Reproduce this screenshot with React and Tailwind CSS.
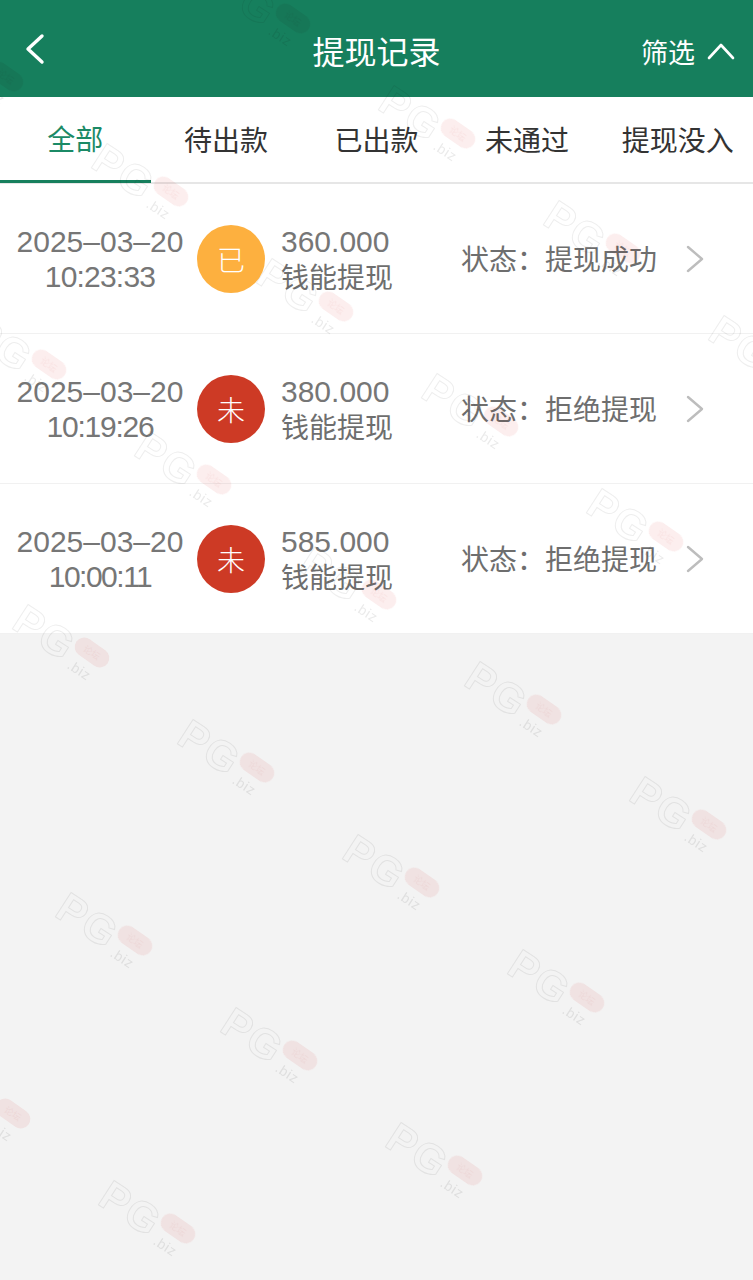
import React from 'react';

const tabs = ['全部', '待出款', '已出款', '未通过', '提现没入'];

const records = [
  { date: '2025–03–20', time: '10:23:33', timeTrack: 'tracking-[-0.8px]', badge: '已', color: 'bg-[#fdb03f]', amount: '360.000', status: '提现成功' },
  { date: '2025–03–20', time: '10:19:26', timeTrack: 'tracking-[-1.2px]', badge: '未', color: 'bg-[#cd3a25]', amount: '380.000', status: '拒绝提现' },
  { date: '2025–03–20', time: '10:00:11', timeTrack: 'tracking-[-1.5px]', badge: '未', color: 'bg-[#cd3a25]', amount: '585.000', status: '拒绝提现' },
];

// site stamp repeats on a skewed lattice, but leaves the far corners empty
const stamps = [];
for (let i = -6; i <= 8; i++) {
  for (let j = -6; j <= 8; j++) {
    const x = 180 + 165 * i - 122 * j;
    const y = 720 + 115 * i + 173 * j;
    const onPage = x > -110 && x < 753 && y > -80 && y < 1280;
    const inEmptyCorner = (x > 500 && y > 1000) || (x > 600 && y < 100);
    if (onPage && !inEmptyCorner) stamps.push({ x, y });
  }
}

function Stamp({ x, y }) {
  return (
    <div className="absolute h-[80px] w-[100px]" style={{ left: x, top: y }}>
      <div className="absolute left-[14px] top-[-7px] flex rotate-[33deg] origin-top-left items-center">
        <span className="font-['Liberation_Sans',sans-serif] text-[42px] leading-none font-bold tracking-[2px] text-transparent [-webkit-text-stroke:1px_#dddddd]">
          PG
        </span>
      </div>
      <span className="absolute left-[52px] top-[58px] rotate-[33deg] font-['Liberation_Sans',sans-serif] text-[14px] leading-none tracking-wider text-[#d6d6d6]">
        .biz
      </span>
      <div className="absolute left-[58px] top-[38px] flex h-[19px] w-[38px] rotate-[35deg] items-center justify-center rounded-full bg-[#f9dcdc] font-['Noto_Sans_CJK_SC',sans-serif] text-[9px] leading-none text-[#f1c4c4]">
        论坛
      </div>
    </div>
  );
}

function Row({ record }) {
  return (
    <div className="flex h-[150px] items-center border-b border-[#f1f1f1] pl-[16px] text-[#6e6e6e]">
      <div className="w-[168px] text-center font-['Liberation_Sans','Noto_Sans_CJK_SC',sans-serif] text-[30px] leading-[35px] text-[#767676]">
        <div>{record.date}</div>
        <div className={record.timeTrack}>{record.time}</div>
      </div>
      <div className={`ml-[13px] flex h-[68px] w-[68px] items-center justify-center rounded-full text-[28px] font-light text-white ${record.color}`}>
        {record.badge}
      </div>
      <div className="ml-[16px] w-[180px] leading-[35px]">
        <div className="font-['Liberation_Sans',sans-serif] text-[30px] text-[#767676]">{record.amount}</div>
        <div className="text-[28px]">钱能提现</div>
      </div>
      <div className="text-[28px] leading-[35px] whitespace-nowrap">
        状态：<span>{record.status}</span>
      </div>
      <svg className="ml-[28px]" width="20" height="30" viewBox="0 0 20 30" fill="none" stroke="#bdbdbd" strokeWidth="2.4" strokeLinecap="round" strokeLinejoin="round">
        <path d="M3 3 L17 15 L3 27" />
      </svg>
    </div>
  );
}

export default function App() {
  return (
    <div className="relative h-[1280px] w-full overflow-hidden bg-[#f3f3f3] font-['Noto_Sans_CJK_SC',sans-serif]">
      <header className="grid h-[97px] grid-cols-[1fr_auto_1fr] items-center bg-[#167f5d] text-white">
        <div className="pl-[24px]">
          <svg width="22" height="32" viewBox="0 0 22 32" fill="none" stroke="white" strokeWidth="3.4" strokeLinecap="round" strokeLinejoin="round">
            <path d="M18 3 L4 16 L18 29" />
          </svg>
        </div>
        <h1 className="pt-[2px] text-[32px] leading-none font-normal">提现记录</h1>
        <div className="flex items-center justify-end gap-[12px] pt-[5px] pr-[18px]">
          <span className="text-[27px] leading-none">筛选</span>
          <svg width="28" height="18" viewBox="0 0 28 18" fill="none" stroke="white" strokeWidth="2.6" strokeLinecap="round" strokeLinejoin="round">
            <path d="M2 16 L14 3 L26 16" />
          </svg>
        </div>
      </header>

      <nav className="grid h-[87px] grid-cols-5 border-b-2 border-[#e6e6e6] bg-white">
        {tabs.map((tab, i) => (
          <div
            key={tab}
            className={`flex h-[86px] items-center justify-center pb-[2px] text-[28px] ${i === 0 ? 'border-b-[3px] border-[#167f5d] text-[#1b8a66]' : 'text-[#333333]'}`}
          >
            {tab}
          </div>
        ))}
      </nav>

      <div className="bg-white">
        {records.map((record) => (
          <Row key={record.time} record={record} />
        ))}
      </div>

      <div className="pointer-events-none absolute inset-0 opacity-50 mix-blend-multiply">
        {stamps.map((s) => (
          <Stamp key={`${s.x}-${s.y}`} x={s.x} y={s.y} />
        ))}
      </div>
    </div>
  );
}
